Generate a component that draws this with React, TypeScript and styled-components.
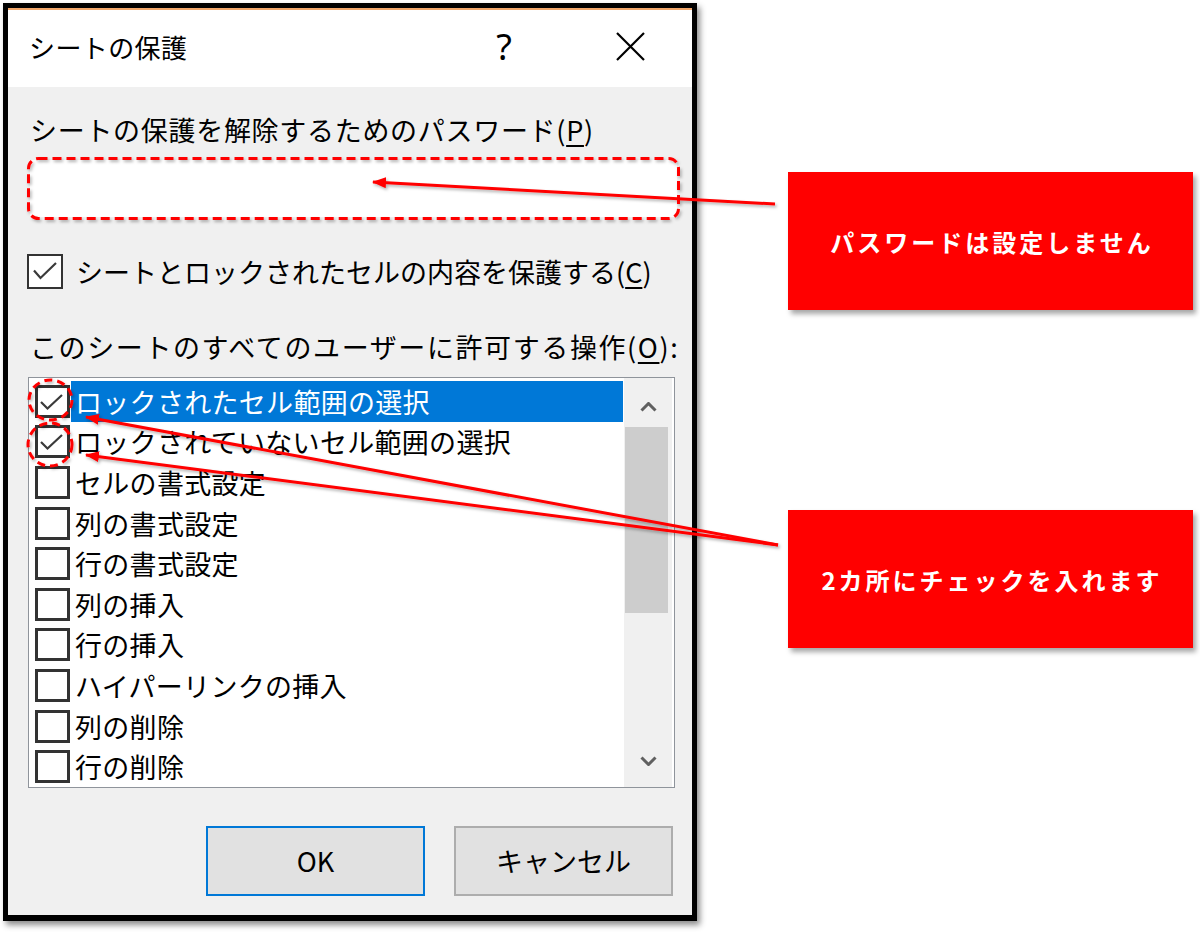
import React from 'react';
import styled, { createGlobalStyle } from 'styled-components';

const GlobalStyle = createGlobalStyle`
  html, body {
    margin: 0;
    padding: 0;
    background: #ffffff;
  }
  body {
    font-family: "Noto Sans CJK JP", "Noto Sans", sans-serif;
    color: #000;
  }
  * {
    box-sizing: border-box;
  }
`;

const Page = styled.div`
  position: relative;
  width: 1200px;
  height: 935px;
  padding: 3px 0 0 3px;
  display: flex;
  align-items: flex-start;
  overflow: hidden;
`;

// Dialog window
const Dialog = styled.div`
  width: 694px;
  height: 918px;
  border: 5px solid #000;
  border-bottom-width: 6px;
  display: flex;
  flex-direction: column;
  background: #f0f0f0;
  box-shadow: 3px 4px 6px rgba(0, 0, 0, 0.45);
`;

const TitleBar = styled.div`
  height: 79px;
  background: #ffffff;
  border-top: 2px solid #f1a66a;
  display: flex;
  align-items: center;
  padding-left: 21px;
`;

const TitleText = styled.div`
  flex: 1;
  font-size: 26px;
  line-height: 36px;
  margin-top: -4px;
  letter-spacing: 0.4px;
`;

const TitleButton = styled.div`
  width: 124px;
  height: 100%;
  display: flex;
  align-items: center;
  justify-content: center;
  font-family: "Noto Sans", "DejaVu Sans", sans-serif;
  font-size: 36px;
  line-height: 1;
  margin-top: -4px;
`;

const HelpButton = styled(TitleButton)`
  padding-right: 4px;
`;

const Body = styled.div`
  flex: 1;
  display: flex;
  flex-direction: column;
  padding: 0 10px 19px 22px;
`;

const Label = styled.div<{ $top: number; $spacing: number }>`
  font-size: 27px;
  line-height: 36px;
  height: 36px;
  margin-top: ${p => p.$top}px;
  white-space: nowrap;
  letter-spacing: ${p => p.$spacing}px;

  u {
    text-decoration-thickness: 2px;
    text-underline-offset: 4px;
  }
`;

const PasswordField = styled.div`
  margin-top: 12px;
  width: 647px;
  height: 57px;
  background: #ffffff;
`;

const CheckRow = styled.label`
  display: flex;
  align-items: center;
  gap: 13px;
  margin-top: 37px;
  margin-left: -3px;
  height: 35px;
`;

const CheckBox = styled.span<{ $w: number; $h: number; $bw: number }>`
  flex: none;
  width: ${p => p.$w}px;
  height: ${p => p.$h}px;
  border: ${p => p.$bw}px solid #333333;
  background: #ffffff;
  display: flex;
  align-items: center;
  justify-content: center;
`;

const CheckText = styled.span`
  font-size: 27px;
  line-height: 36px;
  white-space: nowrap;
  letter-spacing: 0px;

  u {
    text-decoration-thickness: 2px;
    text-underline-offset: 4px;
  }
`;

const ListBox = styled.div`
  margin-top: 12px;
  margin-left: -2px;
  width: 647px;
  height: 411px;
  border: 1px solid #8f949b;
  background: #ffffff;
  display: flex;
`;

const ListItems = styled.div`
  flex: 1;
  padding-top: 3px;
  overflow: hidden;
`;

const ListRow = styled.div`
  height: 40.6px;
  display: flex;
  align-items: center;
  padding-left: 6px;
`;

const ItemLabel = styled.span<{ $selected?: boolean }>`
  flex: 1;
  align-self: stretch;
  display: flex;
  align-items: center;
  margin-left: 1px;
  margin-right: 1px;
  padding-left: 4px;
  font-size: 27px;
  white-space: nowrap;
  letter-spacing: 0.3px;
  background: ${p => (p.$selected ? '#0078d7' : 'transparent')};
  color: ${p => (p.$selected ? '#ffffff' : '#000000')};
`;

const ScrollBar = styled.div`
  width: 48px;
  margin-right: 2px;
  background: #f0f0f0;
  display: flex;
  flex-direction: column;
`;

const ScrollArrow = styled.div<{ $pad: number }>`
  height: 49px;
  display: flex;
  justify-content: center;
  padding-top: ${p => p.$pad}px;
`;

const ScrollThumb = styled.div`
  height: 186px;
  width: 43px;
  margin-left: 1px;
  background: #cdcdcd;
`;

const ScrollTrack = styled.div`
  flex: 1;
`;

const ButtonRow = styled.div`
  margin-top: 38px;
  margin-right: 9px;
  display: flex;
  justify-content: flex-end;
  gap: 29px;
`;

const DialogButton = styled.button<{ $default?: boolean }>`
  width: 219px;
  height: 70px;
  background: #e1e1e1;
  border: 2px solid ${p => (p.$default ? '#0078d7' : '#adadad')};
  font-family: "Noto Sans CJK JP", "Noto Sans", sans-serif;
  font-size: 27px;
  line-height: 36px;
  color: #000;
  padding: 0;
`;

// Callouts on the right
const Callouts = styled.div`
  margin-left: 91px;
  margin-top: 169px;
  display: flex;
  flex-direction: column;
  gap: 200px;
`;

const Callout = styled.div`
  width: 405px;
  height: 138px;
  background: #ff0000;
  color: #ffffff;
  font-weight: 700;
  font-size: 24px;
  letter-spacing: 3px;
  padding-left: 3px;
  display: flex;
  align-items: center;
  justify-content: center;
  box-shadow: 3px 4px 5px rgba(0, 0, 0, 0.35);
  white-space: nowrap;
`;

const Annotations = styled.svg`
  position: absolute;
  left: 0;
  top: 0;
  pointer-events: none;
`;

const items = [
  { text: 'ロックされたセル範囲の選択', checked: true, selected: true },
  { text: 'ロックされていないセル範囲の選択', checked: true },
  { text: 'セルの書式設定' },
  { text: '列の書式設定' },
  { text: '行の書式設定' },
  { text: '列の挿入' },
  { text: '行の挿入' },
  { text: 'ハイパーリンクの挿入' },
  { text: '列の削除' },
  { text: '行の削除' },
];

// check mark drawn inside the box's inner area
const Check = ({ w, h, points }: { w: number; h: number; points: string }) => (
  <svg width={w} height={h} viewBox={`0 0 ${w} ${h}`}>
    <polyline points={points} fill="none" stroke="#3a3a3a" strokeWidth="2.2" />
  </svg>
);

const Chevron = ({ down }: { down?: boolean }) => (
  <svg width="17" height="10" viewBox="0 0 17 10">
    <path
      d={down ? 'M1.5 1.5 L8.5 8.5 L15.5 1.5' : 'M1.5 8.5 L8.5 1.5 L15.5 8.5'}
      fill="none"
      stroke="#606060"
      strokeWidth="3"
    />
  </svg>
);

const App = () => {
  return (
    <>
      <GlobalStyle />
      <Page>
        <Dialog>
          <TitleBar>
            <TitleText>シートの保護</TitleText>
            <HelpButton>?</HelpButton>
            <TitleButton>
              <svg width="29" height="29" viewBox="0 0 29 29">
                <path d="M1 1 L28 28 M28 1 L1 28" stroke="#000" strokeWidth="2.2" />
              </svg>
            </TitleButton>
          </TitleBar>
          <Body>
            <Label $top={25} $spacing={0.7}>
              シートの保護を解除するためのパスワード(<u>P</u>)
            </Label>
            <PasswordField />
            <CheckRow>
              <CheckBox $w={36} $h={35} $bw={2.5}>
                <Check w={31} h={30} points="4,13.5 10.5,21 26,6" />
              </CheckBox>
              <CheckText>
                シートとロックされたセルの内容を保護する(<u>C</u>)
              </CheckText>
            </CheckRow>
            <Label $top={40} $spacing={1.6}>
              このシートのすべてのユーザーに許可する操作(<u>O</u>):
            </Label>
            <ListBox>
              <ListItems>
                {items.map(item => (
                  <ListRow key={item.text}>
                    <CheckBox $w={35} $h={33} $bw={3}>
                      {item.checked && <Check w={29} h={27} points="3,14 9.5,20.5 24,7" />}
                    </CheckBox>
                    <ItemLabel $selected={item.selected}>{item.text}</ItemLabel>
                  </ListRow>
                ))}
              </ListItems>
              <ScrollBar>
                <ScrollArrow $pad={24}>
                  <Chevron />
                </ScrollArrow>
                <ScrollThumb />
                <ScrollTrack />
                <ScrollArrow $pad={18}>
                  <Chevron down />
                </ScrollArrow>
              </ScrollBar>
            </ListBox>
            <ButtonRow>
              <DialogButton $default>OK</DialogButton>
              <DialogButton>キャンセル</DialogButton>
            </ButtonRow>
          </Body>
        </Dialog>

        <Callouts>
          <Callout>パスワードは設定しません</Callout>
          <Callout>2カ所にチェックを入れます</Callout>
        </Callouts>

        <Annotations width="1200" height="935" viewBox="0 0 1200 935">
          <defs>
            <filter id="shadow" x="-10%" y="-10%" width="120%" height="130%">
              <feDropShadow dx="1.5" dy="2" stdDeviation="1.5" floodColor="#000" floodOpacity="0.3" />
            </filter>
            <marker
              id="head"
              markerUnits="userSpaceOnUse"
              markerWidth="14"
              markerHeight="11"
              viewBox="0 0 14 11"
              refX="13"
              refY="5.5"
              orient="auto"
            >
              <path d="M0 0 L14 5.5 L0 11 Z" fill="#ff0000" />
            </marker>
          </defs>
          <g filter="url(#shadow)" fill="none" stroke="#ff0000" strokeWidth="3">
            <rect x="28.5" y="158.5" width="650" height="60" rx="10" strokeDasharray="9 5" />
            <ellipse cx="50.5" cy="400" rx="21.5" ry="20" strokeDasharray="8 5" />
            <ellipse cx="50" cy="444.5" rx="22" ry="21.5" strokeDasharray="8 5" />
            <line x1="775" y1="204" x2="373" y2="182" markerEnd="url(#head)" />
            <line x1="778" y1="545" x2="86" y2="417" markerEnd="url(#head)" />
            <line x1="778" y1="545" x2="86" y2="455" markerEnd="url(#head)" />
          </g>
        </Annotations>
      </Page>
    </>
  );
};

export default App;
